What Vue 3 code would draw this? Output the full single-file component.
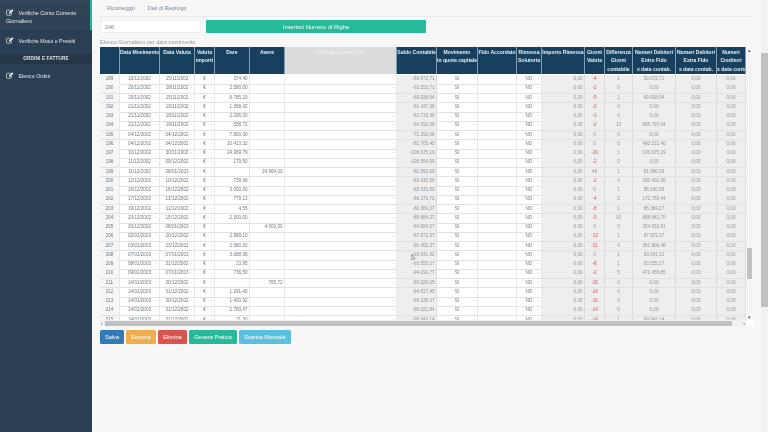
<template>
  <div class="page">
    <aside class="sidebar">
      <a class="side-item active">
        <svg class="edit-icon" viewBox="0 0 16 14"><path d="M11 8v3a1.500 1.500 0 0 1-1.500 1.500H2.500A1.500 1.500 0 0 1 1 11V4a1.500 1.500 0 0 1 1.500-1.500H9" fill="none" stroke="currentColor" stroke-width="1.400"/><path d="M6 6.500 12.500 0.500l2.500 2.500-6.500 6.500H6z" fill="currentColor"/></svg>
        Verifiche Conto Corrente Giornaliero
      </a>
      <a class="side-item">
        <svg class="edit-icon" viewBox="0 0 16 14"><path d="M11 8v3a1.500 1.500 0 0 1-1.500 1.500H2.500A1.500 1.500 0 0 1 1 11V4a1.500 1.500 0 0 1 1.500-1.500H9" fill="none" stroke="currentColor" stroke-width="1.400"/><path d="M6 6.500 12.500 0.500l2.500 2.500-6.500 6.500H6z" fill="currentColor"/></svg>
        Verifiche Mutui e Prestiti
      </a>
      <div class="side-section">ORDINI E FATTURE</div>
      <a class="side-item">
        <svg class="edit-icon" viewBox="0 0 16 14"><path d="M11 8v3a1.500 1.500 0 0 1-1.500 1.500H2.500A1.500 1.500 0 0 1 1 11V4a1.500 1.500 0 0 1 1.500-1.500H9" fill="none" stroke="currentColor" stroke-width="1.400"/><path d="M6 6.500 12.500 0.500l2.500 2.500-6.500 6.500H6z" fill="currentColor"/></svg>
        Elenco Ordini
      </a>
    </aside>

    <main class="content">
      <nav class="tabs">
        <span>Riconteggio</span>
        <span>Dati di Riepilogo</span>
      </nav>

      <div class="rows-form">
        <input class="rows-input" value="246" />
        <button class="rows-button">Inserisci Numero di Righe</button>
      </div>

      <p class="table-title">Elenco Giornaliero per data movimento</p>

      <div class="table-box">
        <div class="table-view">
          <div class="grid-row head">
            <div v-for="(h, i) in headers" :key="i" class="th" :class="{ muted: i === 6 }">
              <div v-for="line in h" :key="line">{{ line }}</div>
            </div>
          </div>
          <div class="table-body">
            <div v-for="r in rows" :key="r.n" class="grid-row body-row">
              <div class="td soft center">{{ r.n }}</div>
              <div class="td center dash">{{ r.mov }}</div>
              <div class="td center dash">{{ r.val }}</div>
              <div class="td center dash">€</div>
              <div class="td right">{{ r.dare }}</div>
              <div class="td right">{{ r.avere }}</div>
              <div class="td dash"></div>
              <div class="td grey right">{{ r.saldo }}</div>
              <div class="td center dash">SI</div>
              <div class="td"></div>
              <div class="td center dash">NO</div>
              <div class="td grey right">0,00</div>
              <div class="td grey center" :class="{ neg: r.gg < 0 }">{{ r.gg }}</div>
              <div class="td grey center">{{ r.diff }}</div>
              <div class="td grey center">{{ r.num }}</div>
              <div class="td grey center">0,00</div>
              <div class="td grey center">0,00</div>
            </div>
          </div>
          <svg class="cursor" viewBox="0 0 6 10"><path d="M1 1v7l2-1.500 2 0z" fill="#fff" stroke="#555" stroke-width=".7"/></svg>
        </div>

        <div class="vbar">
          <span class="arrow">▴</span>
          <div class="vtrack"><div class="vthumb"></div></div>
          <span class="arrow">▾</span>
        </div>

        <div class="hbar">
          <span class="arrow">‹</span>
          <div class="hthumb"></div>
          <span class="arrow">›</span>
        </div>
        <div class="corner"></div>
      </div>

      <div class="actions">
        <button class="btn blue">Salva</button>
        <button class="btn orange">Esporta</button>
        <button class="btn red">Elimina</button>
        <button class="btn green">Genera Pratica</button>
        <button class="btn cyan">Scarica Manuale</button>
      </div>
    </main>

    <div class="page-scroll"><div class="page-thumb"></div></div>
  </div>
</template>

<script setup>
const headers = [
  [""],
  ["Data Movimento"],
  ["Data Valuta"],
  ["Valuta", "importi"],
  ["Dare"],
  ["Avere"],
  ["Tipologia movimento"],
  ["Saldo Contabile"],
  ["Movimento", "in quota capitale"],
  ["Fido Accordato"],
  ["Rimessa", "Solutoria"],
  ["Importo Rimessa"],
  ["Giorni", "Valuta"],
  ["Differenza", "Giorni", "contabile"],
  ["Numeri Debitori", "Entro Fido", "x data contab."],
  ["Numeri Debitori", "Extra Fido", "x data contab."],
  ["Numeri", "Creditori", "x data contab."],
];

// n, movimento, valuta, dare, avere, saldo, giorni, differenza, numeri
const raw = [
  [189, "19/11/2002", "15/11/2002", "374,40", "", "-59.672,71", -4, 1, "59.672,71"],
  [190, "20/11/2002", "18/11/2002", "2.580,00", "", "-63.252,71", -2, 0, "0,00"],
  [191, "20/11/2002", "15/11/2002", "6.785,23", "", "-69.938,94", -5, 1, "69.938,94"],
  [192, "21/11/2002", "19/11/2002", "1.398,42", "", "-61.437,36", -2, 0, "0,00"],
  [193, "21/11/2002", "18/11/2002", "2.296,00", "", "-63.733,36", -3, 0, "0,00"],
  [194, "21/11/2002", "19/11/2002", "558,72", "", "-64.292,08", -2, 13, "835.797,04"],
  [195, "04/12/2002", "04/12/2002", "7.800,00", "", "-71.392,08", 0, 0, "0,00"],
  [196, "04/12/2002", "04/12/2002", "10.413,32", "", "-81.705,40", 0, 6, "490.232,40"],
  [197, "10/12/2002", "30/11/2002", "24.969,79", "", "-106.675,19", -10, 1, "106.675,19"],
  [198, "11/12/2002", "09/12/2002", "179,50", "", "-106.854,69", -2, 0, "0,00"],
  [199, "11/12/2002", "28/01/2003", "", "24.964,00", "-81.890,69", 48, 1, "81.890,69"],
  [200, "12/12/2002", "10/12/2002", "739,99", "", "-82.630,59", -2, 4, "330.402,36"],
  [201, "16/12/2002", "16/12/2002", "3.000,00", "", "-85.630,59", 0, 1, "85.630,59"],
  [202, "17/12/2002", "13/12/2002", "779,13", "", "-86.379,72", -4, 2, "172.759,44"],
  [203, "19/12/2002", "11/12/2002", "4,55", "", "-86.384,27", -8, 1, "86.384,27"],
  [204, "20/12/2002", "15/12/2002", "2.500,00", "", "-88.884,27", -5, 10, "888.842,70"],
  [205, "30/12/2002", "08/01/2003", "", "4.000,00", "-84.884,27", 9, 3, "254.652,81"],
  [206, "02/01/2003", "20/12/2002", "2.988,10", "", "-87.872,37", -13, 1, "87.872,37"],
  [207, "03/01/2003", "23/12/2002", "2.580,00", "", "-90.452,37", -11, 4, "361.809,48"],
  [208, "07/01/2003", "07/01/2003", "3.088,95", "", "-93.541,32", 0, 1, "93.541,32"],
  [209, "08/01/2003", "31/12/2002", "13,95", "", "-93.555,27", -8, 1, "93.555,27"],
  [210, "09/01/2003", "07/01/2003", "736,50", "", "-94.291,77", -2, 5, "471.458,85"],
  [211, "14/01/2003", "30/12/2002", "", "765,72", "-93.526,05", -15, 0, "0,00"],
  [212, "14/01/2003", "31/12/2002", "1.291,40", "", "-94.817,45", -14, 0, "0,00"],
  [213, "14/01/2003", "30/12/2002", "1.420,92", "", "-96.238,37", -15, 0, "0,00"],
  [214, "14/01/2003", "31/12/2002", "2.783,47", "", "-99.021,84", -14, 0, "0,00"],
  [215, "14/01/2003", "31/12/2002", "21,30", "", "-99.043,14", -14, 1, "99.043,14"],
];

const rows = raw.map(([n, mov, val, dare, avere, saldo, gg, diff, num]) => ({
  n, mov, val, dare, avere, saldo, gg, diff, num,
}));
</script>

<style>
html,
body {
  margin: 0;
  background: #f7f7f7;
  overflow: hidden;
}
</style>

<style scoped>
.page {
  display: flex;
  width: 768px;
  height: 432px;
  font-family: "Liberation Sans", Arial, sans-serif;
  color: #73879c;
  background: #f7f7f7;
  overflow: hidden;
  /* the reference is a soft, upscaled capture */
  filter: blur(0.3px);
}

/* Sidebar */
.sidebar {
  width: 92px;
  flex: none;
  background: #2a3f54;
  color: #e7e7e7;
  font-size: 5.300px;
}
.side-item {
  display: block;
  padding: 7px 4px 5px 6px;
  line-height: 7.500px;
}
.side-item.active {
  height: 30px;
  box-sizing: border-box;
  padding-top: 9px;
  background: linear-gradient(#334556, #2c4257);
  border-right: 2px solid #1abb9c;
}
.edit-icon {
  width: 8px;
  height: 7px;
  margin-right: 3px;
  vertical-align: -1px;
}
.side-section {
  margin-top: 3px;
  margin-bottom: 1px;
  height: 10px;
  line-height: 10px;
  text-align: center;
  font-size: 4.600px;
  font-weight: bold;
  letter-spacing: 0.2px;
  background: #243648;
}

/* Main */
.content {
  width: 669px;
  flex: none;
  padding-left: 8px;
  box-sizing: border-box;
}
.tabs {
  display: flex;
  gap: 13px;
  height: 17px;
  padding-left: 7px;
  box-sizing: border-box;
  align-items: center;
  font-size: 5.300px;
  border-bottom: 1px solid #e6e9ed;
  margin-right: 8px;
}
.rows-form {
  display: flex;
  gap: 5px;
  height: 13px;
  margin-top: 3px;
}
.rows-input {
  width: 101px;
  box-sizing: border-box;
  border: 1px solid #eee;
  background: #fff;
  color: #73879c;
  padding: 0 4px;
  font: 5.500px "Liberation Sans", Arial, sans-serif;
  outline: none;
}
.rows-button {
  width: 220px;
  border: 0;
  border-radius: 1px;
  background: #26b99a;
  color: #fff;
  font: 5.800px "Liberation Sans", Arial, sans-serif;
  padding: 0;
}
.table-title {
  margin: 6px 0 0;
  height: 8px;
  line-height: 7px;
  font-size: 5.500px;
  color: #8b9aa9;
}

/* Table */
.table-box {
  display: grid;
  grid-template-columns: 646px 8px;
  grid-template-rows: 273px 6px;
  width: 654px;
}
.table-view {
  position: relative;
  overflow: hidden;
  background: #fff;
}
.grid-row {
  display: grid;
  grid-template-columns: 20px 40px 35px 20px 35px 35px 112px 40px 41px 39px 25px 43px 20px 28px 43px 41px 29px;
}
.head {
  height: 27px;
  margin-bottom: 1px;
  background: #17405f;
}
.th {
  color: #e9eef2;
  font-size: 5.100px;
  font-weight: bold;
  line-height: 8.300px;
  padding-top: 1px;
  text-align: center;
  white-space: nowrap;
  overflow: hidden;
  border-right: 0.500px solid #7f9db3;
}
.th.muted {
  background: #dcdcdc;
  color: #f0f0f0;
  font-weight: normal;
}
.body-row {
  height: 9.250px;
}
.td {
  position: relative;
  font-size: 4.600px;
  line-height: 8.750px;
  color: #6d7882;
  white-space: nowrap;
  border-bottom: 0.500px solid #dfe2e5;
  border-right: 0.500px solid #e8e8e8;
  padding: 0 1.500px;
}
.center {
  text-align: center;
}
.right {
  text-align: right;
}
.soft {
  background: #f6f6f6;
}
.grey {
  background: #eeeeee;
  border-right-color: #dcdcdc;
  color: #8d959c;
}
.neg {
  color: #d9534f;
}
/* small select marker at the end of the cell */
.dash::after {
  content: "-";
  position: absolute;
  right: 2px;
  top: 0;
  color: #bbb;
}
.cursor {
  position: absolute;
  left: 311px;
  top: 206px;
  width: 5px;
  height: 9px;
}

/* Scrollbars */
.vbar {
  display: flex;
  flex-direction: column;
  align-items: center;
  background: #f7f7f7;
  padding-right: 2px;
  box-sizing: border-box;
}
.vtrack {
  flex: 1;
  width: 5px;
  padding-top: 195px;
  box-sizing: border-box;
  background: #f3f3f3;
}
.vthumb {
  height: 31px;
  background: #c1c1c1;
}
.arrow {
  height: 6px;
  line-height: 6px;
  font-size: 5px;
  color: #555;
}
.hbar {
  display: flex;
  align-items: center;
  gap: 2px;
  padding: 0 1px;
  background: #f1f1f1;
}
.hthumb {
  flex: 1;
  margin-right: 9px;
  height: 5px;
  background: #c1c1c1;
}
.corner {
  background: #fff;
}

/* Buttons */
.actions {
  display: flex;
  gap: 2px;
  margin-top: 4px;
}
.btn {
  height: 14px;
  border: 0;
  border-radius: 1.500px;
  color: #fff;
  padding: 0;
  font: 5.600px "Liberation Sans", Arial, sans-serif;
}
.blue {
  width: 24px;
  background: #337ab7;
}
.orange {
  width: 30px;
  background: #f0ad4e;
}
.red {
  width: 29px;
  background: #d9534f;
}
.green {
  width: 48px;
  background: #26b99a;
}
.cyan {
  width: 52px;
  background: #5bc0de;
}

/* Page scrollbar */
.page-scroll {
  flex: 1;
  background: #f1f1f1;
  padding-top: 53px;
}
.page-thumb {
  height: 254px;
  background: #c1c1c1;
}
</style>
